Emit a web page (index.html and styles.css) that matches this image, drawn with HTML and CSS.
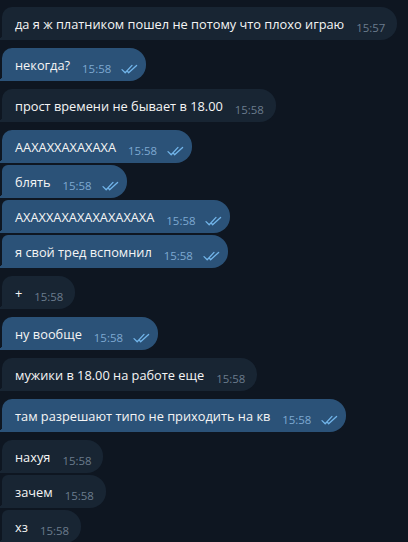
FILE: index.html
```html
<!DOCTYPE html>
<html lang="ru">

<head>
    <meta charset="UTF-8" />
    <meta name="viewport" content="width=device-width, initial-scale=1.0" />
    <title>Чат</title>
    <link rel="stylesheet" href="styles.css">
</head>

<body>
    <div class="chat">
        <div class="msg in">
            <span class="text">да я ж платником пошел не потому что плохо играю</span>
            <span class="meta"><span class="time">15:57</span></span>
        </div>

        <div class="msg out">
            <span class="text">некогда?</span>
            <span class="meta"><span class="time">15:58</span><svg class="checks" viewBox="0 0 17 10"><path d="M1 5.6 L4.2 8.8 L11 1.4 M6.6 7.4 L7.6 8.8 L15.6 1.4" /></svg></span>
        </div>

        <div class="msg in">
            <span class="text">прост времени не бывает в 18.00</span>
            <span class="meta"><span class="time">15:58</span></span>
        </div>

        <!-- outgoing group -->
        <div class="msg out">
            <span class="text">ААХАХХАХАХАХА</span>
            <span class="meta"><span class="time">15:58</span><svg class="checks" viewBox="0 0 17 10"><path d="M1 5.6 L4.2 8.8 L11 1.4 M6.6 7.4 L7.6 8.8 L15.6 1.4" /></svg></span>
        </div>
        <div class="msg out next">
            <span class="text">блять</span>
            <span class="meta"><span class="time">15:58</span><svg class="checks" viewBox="0 0 17 10"><path d="M1 5.6 L4.2 8.8 L11 1.4 M6.6 7.4 L7.6 8.8 L15.6 1.4" /></svg></span>
        </div>
        <div class="msg out next">
            <span class="text">АХАХХАХАХАХАХАХАХА</span>
            <span class="meta"><span class="time">15:58</span><svg class="checks" viewBox="0 0 17 10"><path d="M1 5.6 L4.2 8.8 L11 1.4 M6.6 7.4 L7.6 8.8 L15.6 1.4" /></svg></span>
        </div>
        <div class="msg out next">
            <span class="text">я свой тред вспомнил</span>
            <span class="meta"><span class="time">15:58</span><svg class="checks" viewBox="0 0 17 10"><path d="M1 5.6 L4.2 8.8 L11 1.4 M6.6 7.4 L7.6 8.8 L15.6 1.4" /></svg></span>
        </div>

        <div class="msg in">
            <span class="text">+</span>
            <span class="meta"><span class="time">15:58</span></span>
        </div>

        <div class="msg out">
            <span class="text">ну вообще</span>
            <span class="meta"><span class="time">15:58</span><svg class="checks" viewBox="0 0 17 10"><path d="M1 5.6 L4.2 8.8 L11 1.4 M6.6 7.4 L7.6 8.8 L15.6 1.4" /></svg></span>
        </div>

        <div class="msg in">
            <span class="text">мужики в 18.00 на работе еще</span>
            <span class="meta"><span class="time">15:58</span></span>
        </div>

        <div class="msg out">
            <span class="text">там разрешают типо не приходить на кв</span>
            <span class="meta"><span class="time">15:58</span><svg class="checks" viewBox="0 0 17 10"><path d="M1 5.6 L4.2 8.8 L11 1.4 M6.6 7.4 L7.6 8.8 L15.6 1.4" /></svg></span>
        </div>

        <!-- incoming group -->
        <div class="msg in">
            <span class="text">нахуя</span>
            <span class="meta"><span class="time">15:58</span></span>
        </div>
        <div class="msg in next">
            <span class="text">зачем</span>
            <span class="meta"><span class="time">15:58</span></span>
        </div>
        <div class="msg in next">
            <span class="text">хз</span>
            <span class="meta"><span class="time">15:58</span></span>
        </div>
    </div>
</body>

</html>
```

FILE: styles.css
```css
body {
    margin: 0;
    height: 542px;
    overflow: hidden;
    background-color: #0e1621;
    font-family: 'Open Sans', 'Noto Sans', sans-serif;
    color: #f5f5f5;
}

.chat {
    display: flex;
    flex-direction: column;
    align-items: flex-start;
    padding-top: 7px;
}

.msg {
    --bubble: #182533;
    position: relative;
    display: flex;
    align-items: flex-start;
    box-sizing: border-box;
    height: 33px;
    margin: 8px 0 0 2px;
    padding: 8px 12px 0 13px;
    background-color: var(--bubble);
    border-radius: 10px 16px 16px 0;
}

.msg:first-child {
    margin-top: 0;
}

.msg.next {
    margin-top: 2px;
    border-top-left-radius: 6px;
}

/* little tail in the bottom left corner */
.msg::before {
    content: "";
    position: absolute;
    left: -3px;
    bottom: 0;
    width: 3px;
    height: 5px;
    background: radial-gradient(circle at 0 0, transparent 3px, var(--bubble) 3.6px);
}

.msg.out {
    --bubble: #2b5278;
    padding-right: 8px;
}

.text {
    font-size: 12.8px;
    line-height: 18px;
    white-space: nowrap;
}

.meta {
    display: flex;
    align-items: flex-end;
    gap: 10px;
    margin: 4px 0 0 12px;
    line-height: 18px;
}

.time {
    font-size: 11.4px;
    color: #6b7c8d;
}

.out .time {
    color: #7ea9d1;
}

.checks {
    width: 17px;
    height: 10px;
    margin-bottom: 4px;
    fill: none;
    stroke: #72b5ea;
    stroke-width: 1.3;
    stroke-linecap: round;
    stroke-linejoin: round;
}
```
